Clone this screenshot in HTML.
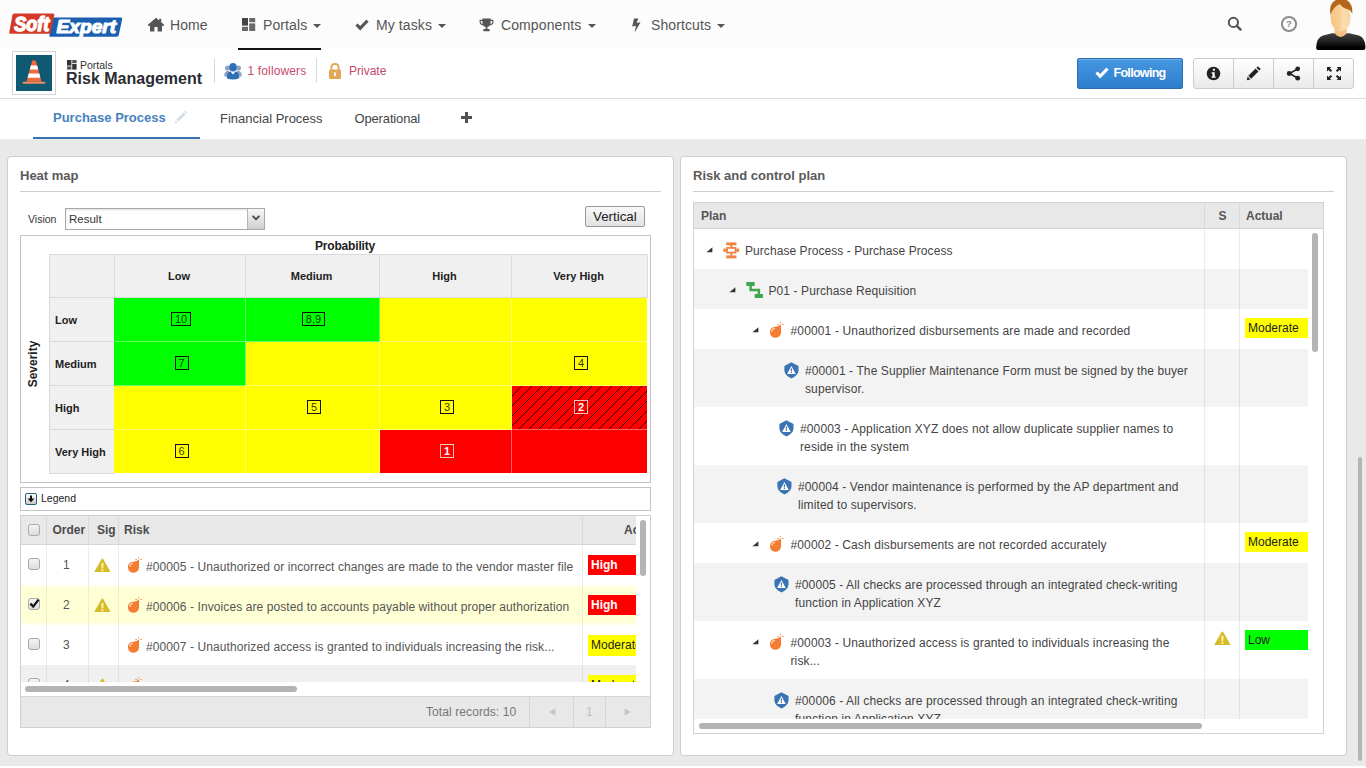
<!DOCTYPE html>
<html>
<head>
<meta charset="utf-8">
<title>Risk Management</title>
<style>
*{box-sizing:border-box;margin:0;padding:0}
html,body{width:1366px;height:768px;overflow:hidden}
body{font-family:"Liberation Sans",sans-serif;background:#e9e9e9;color:#444;position:relative;font-size:12px}
.abs{position:absolute}
.t{position:absolute;white-space:nowrap;line-height:1}
#nav{position:absolute;left:0;top:0;width:1366px;height:50px;background:linear-gradient(#fcfcfc 0,#fcfcfc 47px,#fff 49px)}
#hdr{position:absolute;left:0;top:50px;width:1366px;height:49px;background:#fff;border-bottom:1px solid #dcdcdc}
#tabs{position:absolute;left:0;top:99px;width:1366px;height:40px;background:#fff}
.nv{font-size:14px;color:#555;top:18px;letter-spacing:.1px}
.caret{position:absolute;width:0;height:0;border-left:4px solid transparent;border-right:4px solid transparent;border-top:4px solid #555;top:24px}
.panel{position:absolute;top:156px;width:667px;height:600px;background:#fff;border:1px solid #cdcdcd;border-radius:4px}
.ptitle{font-size:13px;font-weight:bold;color:#555;top:169px}
.prule{position:absolute;height:1px;background:#d0d0d0;top:190px}

.hc{position:absolute;background:#f0f0f0;font-weight:bold;font-size:11px;color:#222;display:flex;align-items:center}
.hc.c{justify-content:center;padding-right:2px}
.cell{position:absolute;z-index:1}
.nb,.wl{z-index:2}
.nb{position:absolute;height:14px;border:1px solid #111;font-size:11px;line-height:12px;text-align:center;color:rgba(0,0,0,.82)}
.nb.w{border-color:#f6c2c2;color:#fff;font-weight:bold}
.gl{position:absolute;background:#dadada}
.wl{position:absolute;background:rgba(255,255,255,.38)}
.gh{position:absolute;font-weight:bold;font-size:12px;color:#4c4c4c;white-space:nowrap;line-height:1}
.gt{position:absolute;font-size:12px;color:#555;white-space:nowrap;line-height:1;letter-spacing:.09px}
.cb{position:absolute;width:12px;height:12px;border:1px solid #a9a9a9;border-radius:3px;background:linear-gradient(#f4f4f4,#dcdcdc)}
.lbl{position:absolute;font-size:12px;line-height:1;white-space:nowrap;overflow:hidden}
.tr,#t10,#t10+div{letter-spacing:.12px}
#t1{letter-spacing:.06px}#t2{letter-spacing:.09px}#t3{letter-spacing:.146px}#t4{letter-spacing:.105px}#t5{letter-spacing:.126px}#t9{letter-spacing:.136px}
</style>
</head>
<body>
<svg width="0" height="0" style="position:absolute"><defs>
<symbol id="i-bomb" viewBox="0 0 15 17"><path d="M12 2.6 L12.1 10.2 A5.6 5.6 0 1 1 6 4.67 Q9.6 4.8 12 2.6 Z" fill="#f47d33"/><path d="M8.2 2.4 H10.2 M12.8 2.4 H14.8 M11.5 -0.4 V1.3" stroke="#f4935a" stroke-width="0.9" fill="none"/><path d="M2.9 9.2 Q3.3 6.9 5.5 6.2" stroke="#fff" stroke-opacity=".8" stroke-width="1.2" fill="none" stroke-linecap="round"/></symbol>
<symbol id="i-warn" viewBox="0 0 17 15"><path d="M8.4 0.6 Q8.9 0.6 9.2 1.1 L16.2 13.2 Q16.6 14.1 15.6 14.1 H1.2 Q0.2 14.1 0.6 13.2 L7.6 1.1 Q7.9 0.6 8.4 0.6 Z" fill="#d6bb2a"/><path d="M7.4 4.9 H9.5 L9.3 10.2 H7.6 Z M7.5 11.2 H9.4 V13 H7.5 Z" fill="#fff6b0"/></symbol>
<symbol id="i-shield" viewBox="0 0 16 17"><path d="M7.4 0.2 L14.5 4.1 V8.2 Q14.5 13 7.5 16.4 Q0.4 13 0.4 8.2 V4.1 Z" fill="#3a74b4"/><path d="M7.4 4.1 L11.7 11.9 H3.1 Z" fill="#fff"/><path d="M6.7 6.4 H8.1 L7.9 9.4 H6.9 Z M6.8 10.1 H8 V11 H6.8 Z" fill="#3a74b4"/></symbol>
<symbol id="i-arrow" viewBox="0 0 7 7"><path d="M6.4 1.2 V6.2 H0.4 Z" fill="#333"/></symbol>
</defs></svg>
<!-- NAV -->
<div id="nav"></div>
<!-- logo -->
<svg class="abs" style="left:8px;top:10px" width="118" height="30" viewBox="8 10 118 30">
  <path d="M53 17.5 H121 Q122.5 17.5 122.2 19 L118.8 35 Q118.4 36.8 116.8 36.8 H50.5 Q49 36.8 49.3 35.3 Z" fill="#1c5fb0"/>
  <path d="M14 13.5 H53 Q54.6 13.5 54.3 15 L50.6 32.2 Q50.3 33.8 48.7 33.8 H10.6 Q9 33.8 9.3 32.3 L12.4 15 Q12.7 13.5 14 13.5 Z" fill="#d43a27"/>
  <text x="14.2" y="30.9" font-family="Liberation Sans" font-weight="bold" font-style="italic" font-size="19.5" fill="#fff" stroke="#fff" stroke-width="1.4" stroke-linejoin="round" textLength="35" lengthAdjust="spacingAndGlyphs">Soft</text>
  <text x="56.6" y="32.6" font-family="Liberation Sans" font-weight="bold" font-style="italic" font-size="18" fill="#fff" stroke="#fff" stroke-width="1.15" stroke-linejoin="round" textLength="59.5" lengthAdjust="spacingAndGlyphs">Expert</text>
</svg>
<!-- home -->
<svg class="abs" style="left:147px;top:17px" width="18" height="15" viewBox="0 0 18 15"><path d="M9 0.8 L0.6 8 L2 9.2 L3 8.4 V14.4 H7.4 V10 H10.6 V14.4 H15 V8.4 L16 9.2 L17.4 8 L14.2 5.2 V1.8 H12.2 V3.5 Z" fill="#555"/></svg>
<div class="t nv" style="left:170px">Home</div>
<!-- portals -->
<svg class="abs" style="left:242px;top:18px" width="14" height="13" viewBox="0 0 14 13"><rect x="0" y="0" width="6" height="7.6" fill="#444"/><rect x="0" y="8.8" width="6" height="4.2" fill="#6a6a6a"/><rect x="7.2" y="0" width="6" height="4.2" fill="#6a6a6a"/><rect x="7.2" y="5.4" width="6" height="7.6" fill="#6a6a6a"/></svg>
<div class="t nv" style="left:263px">Portals</div>
<div class="caret" style="left:313px"></div>
<div class="abs" style="left:238px;top:48px;width:83px;height:2px;background:#111"></div>
<!-- my tasks -->
<svg class="abs" style="left:354.6px;top:19px" width="14" height="12" viewBox="0 0 14 12"><path d="M0.4 6.6 L2.6 4.4 L5.2 7 L11.4 0.6 L13.6 2.8 L5.2 11.4 Z" fill="#555"/></svg>
<div class="t nv" style="left:376px">My tasks</div>
<div class="caret" style="left:438px"></div>
<!-- components -->
<svg class="abs" style="left:479px;top:18px" width="15" height="14" viewBox="0 0 15 14"><path d="M3.4 0.6 H11.6 V1.8 H14.4 V4 Q14.4 6.6 10.8 7.4 Q9.8 8.6 8.4 9 V11 H10.6 V13.2 H4.4 V11 H6.6 V9 Q5.2 8.6 4.2 7.4 Q0.6 6.6 0.6 4 V1.8 H3.4 Z M1.7 2.9 V4 Q1.7 5.5 3.6 6.2 Q3.4 5 3.4 2.9 Z M13.3 2.9 H11.6 Q11.6 5 11.4 6.2 Q13.3 5.5 13.3 4 Z" fill="#555" fill-rule="evenodd"/></svg>
<div class="t nv" style="left:501px">Components</div>
<div class="caret" style="left:588px"></div>
<!-- shortcuts -->
<svg class="abs" style="left:631px;top:17.6px" width="11" height="15" viewBox="0 0 11 15"><path d="M3 0.6 H7.4 L5.6 5 L9.6 4.2 L3.6 14.6 L5 7.8 L1.2 8.6 Z" fill="#555"/></svg>
<div class="t nv" style="left:651px">Shortcuts</div>
<div class="caret" style="left:717px"></div>
<!-- search -->
<svg class="abs" style="left:1227px;top:16px" width="16" height="16" viewBox="0 0 16 16"><circle cx="6.4" cy="6.4" r="4.6" fill="none" stroke="#555" stroke-width="2"/><path d="M9.8 9.8 L13.6 13.6" stroke="#555" stroke-width="2.4" stroke-linecap="round"/></svg>
<!-- help -->
<svg class="abs" style="left:1280px;top:15px" width="18" height="18" viewBox="0 0 18 18"><circle cx="9" cy="9" r="7.1" fill="none" stroke="#8c8c8c" stroke-width="2"/><text x="9" y="12.4" text-anchor="middle" font-family="Liberation Sans" font-weight="bold" font-size="9.5" fill="#8c8c8c">?</text></svg>
<!-- avatar -->
<svg class="abs" style="left:1315px;top:0" width="51" height="50" viewBox="0 0 51 50">
  <defs><linearGradient id="bd" x1="0" y1="0" x2="0" y2="1"><stop offset="0" stop-color="#404040"/><stop offset="0.55" stop-color="#1c1c1c"/><stop offset="0.85" stop-color="#000"/></linearGradient>
  <linearGradient id="fc" x1="0" y1="0" x2="1" y2="0"><stop offset="0" stop-color="#f5c585"/><stop offset="0.42" stop-color="#f8cd92"/><stop offset="0.6" stop-color="#fbdcae"/><stop offset="1" stop-color="#fad6a2"/></linearGradient></defs>
  <path d="M1.2 47 Q1.6 38 8 35.6 L17 33.2 H34 L44 35.6 Q50 38 50.4 46 V48 Q50.4 50 48.5 50 H3 Q1 50 1.2 47 Z" fill="url(#bd)"/>
  <path d="M19.6 26 H31.6 V33.6 Q25.6 40.5 19.6 33.6 Z" fill="#f4c384"/>
  <ellipse cx="25.6" cy="17.6" rx="10" ry="13.8" fill="url(#fc)"/>
  <path d="M15.5 15 Q13.6 4 20 0.5 L24 -1 H30 Q38.4 3 37.2 14 Q35.8 9.6 31 8.7 Q27 7.6 24.8 4 Q17.8 7 15.5 15 Z" fill="#b3671a"/>
</svg>

<div id="hdr"></div>
<!-- portal icon -->
<div class="abs" style="left:12px;top:51px;width:44px;height:44px;border:1px solid #d4d4d4;background:#fff"></div>
<svg class="abs" style="left:16px;top:55px" width="36" height="36" viewBox="0 0 36 36"><rect width="36" height="36" fill="#0e5a73"/>
<path d="M16.2 5.5 H19.8 L25.5 26.8 H10.5 Z" fill="#f06a3c"/>
<path d="M14.9 10.4 H21.1 L22.2 14.4 H13.8 Z" fill="#fff"/><path d="M12.7 18.6 H23.3 L24.4 22.8 H11.6 Z" fill="#fff"/>
<path d="M8 26.8 H28 Q29.5 26.8 29.5 27.8 Q29.5 28.8 28 28.8 H8 Q6.5 28.8 6.5 27.8 Q6.5 26.8 8 26.8 Z" fill="#f28b63"/></svg>
<svg class="abs" style="left:67px;top:60px" width="10" height="10" viewBox="0 0 10 10"><rect x="0" y="0" width="4.4" height="5.6" fill="#333"/><rect x="0" y="6.4" width="4.4" height="3.2" fill="#555"/><rect x="5.2" y="0" width="4.4" height="3.2" fill="#555"/><rect x="5.2" y="4" width="4.4" height="5.6" fill="#333"/></svg>
<div class="t" style="left:80px;top:59.5px;font-size:10.5px;color:#333">Portals</div>
<div class="t" id="ttl" style="left:66px;top:70.5px;font-size:16px;font-weight:bold;color:#2b2b33">Risk Management</div>
<div class="abs" style="left:214px;top:58px;width:1px;height:25px;background:#d8d8d8"></div>
<div class="abs" style="left:316px;top:58px;width:1px;height:25px;background:#d8d8d8"></div>
<!-- followers icon -->
<svg class="abs" style="left:224px;top:62px" width="18" height="18" viewBox="0 0 18 18">
<circle cx="3.6" cy="6" r="2.6" fill="#8fa3c2"/><circle cx="14.4" cy="6" r="2.6" fill="#8fa3c2"/>
<path d="M0.3 13.5 Q0.3 9 3.8 9 Q6 9 6.6 11 L6 14.5 H0.3 Z" fill="#8fa3c2"/><path d="M17.7 13.5 Q17.7 9 14.2 9 Q12 9 11.4 11 L12 14.5 H17.7 Z" fill="#8fa3c2"/>
<ellipse cx="9" cy="5.2" rx="3.7" ry="4.2" fill="#2f6fb7"/>
<path d="M2.8 16.2 Q2.6 10.2 6.4 9.6 L9 12.4 L11.6 9.6 Q15.4 10.2 15.2 16.2 Q9 18.6 2.8 16.2 Z" fill="#2f6fb7"/></svg>
<div class="t" id="fol" style="left:247.5px;top:64.5px;font-size:12px;color:#c64b6c;letter-spacing:.14px">1 followers</div>
<!-- lock -->
<svg class="abs" style="left:328px;top:62px" width="14" height="18" viewBox="0 0 14 18"><path d="M3.4 8 V5.4 Q3.4 2 7 2 Q10.6 2 10.6 5.4 V8" fill="none" stroke="#e3a758" stroke-width="1.9"/><rect x="1" y="7.6" width="12" height="9.4" rx="1.2" fill="#e3a758"/><rect x="6.1" y="10.4" width="1.8" height="3.8" fill="#fff"/></svg>
<div class="t" id="prv" style="left:349px;top:64.5px;font-size:12px;color:#c4476b">Private</div>
<!-- following btn -->
<div class="abs" style="left:1077px;top:58px;width:106px;height:31px;border:1px solid #2a6db3;border-radius:2px;background:linear-gradient(#4697e1,#2e7ecd);box-shadow:inset 0 1px 0 rgba(255,255,255,.22)"></div>
<svg class="abs" style="left:1095px;top:67px" width="14" height="12" viewBox="0 0 14 12"><path d="M0.4 6.6 L2.6 4.4 L5.2 7 L11.4 0.6 L13.6 2.8 L5.2 11.4 Z" fill="#fff"/></svg>
<div class="t" id="flw" style="left:1113.5px;top:66.5px;font-size:12.5px;font-weight:bold;color:#fff;letter-spacing:-0.7px">Following</div>
<!-- btn group -->
<div class="abs" style="left:1193px;top:58px;width:161px;height:31px;border:1px solid #ccc;border-radius:3px;background:linear-gradient(#fff,#e9e9e9)"></div>
<div class="abs" style="left:1233px;top:59px;width:1px;height:29px;background:#ccc"></div>
<div class="abs" style="left:1273px;top:59px;width:1px;height:29px;background:#ccc"></div>
<div class="abs" style="left:1313px;top:59px;width:1px;height:29px;background:#ccc"></div>
<svg class="abs" style="left:1206px;top:66px" width="15" height="15" viewBox="0 0 15 15"><circle cx="7.5" cy="7.5" r="6.8" fill="#222"/><path d="M6.9 2.8 H8.9 V4.8 H6.9 Z M5.6 6.2 H8.7 V10.6 H9.6 V11.8 H5.6 V10.6 H6.5 V7.4 H5.6 Z" fill="#fff"/></svg>
<svg class="abs" style="left:1246px;top:66px" width="15" height="15" viewBox="0 0 15 15"><path d="M0.8 14.2 L1.6 10.6 L4.4 13.4 Z M2.3 9.8 L9.6 2.5 L12.5 5.4 L5.2 12.7 Z M10.4 1.7 L11.4 0.7 Q11.9 0.3 12.4 0.7 L14.3 2.6 Q14.7 3.1 14.3 3.6 L13.3 4.6 Z" fill="#222"/></svg>
<svg class="abs" style="left:1286px;top:66px" width="15" height="15" viewBox="0 0 15 15"><path d="M11.5 3 L3.5 7.5 L11.5 12" fill="none" stroke="#222" stroke-width="1.5"/><circle cx="11.7" cy="2.8" r="2.4" fill="#222"/><circle cx="3.2" cy="7.5" r="2.4" fill="#222"/><circle cx="11.7" cy="12.2" r="2.4" fill="#222"/></svg>
<svg class="abs" style="left:1327px;top:67px" width="14" height="13" viewBox="0 0 14 13"><g fill="#222"><path d="M0 0 H4.4 L2.9 1.5 L5.2 3.6 L3.8 5 L1.5 2.9 L0 4.4 Z"/><path d="M14 0 H9.6 L11.1 1.5 L8.8 3.6 L10.2 5 L12.5 2.9 L14 4.4 Z"/><path d="M0 13 H4.4 L2.9 11.5 L5.2 9.4 L3.8 8 L1.5 10.1 L0 8.6 Z"/><path d="M14 13 H9.6 L11.1 11.5 L8.8 9.4 L10.2 8 L12.5 10.1 L14 8.6 Z"/></g></svg>

<div id="tabs"></div>
<div class="t" id="tb1" style="left:53px;top:111px;font-size:13px;font-weight:bold;color:#4682be">Purchase Process</div>
<svg class="abs" style="left:174px;top:110px" width="14" height="14" viewBox="0 0 14 14"><path d="M0.6 13.4 L1.6 10.4 L3.6 12.4 Z M2.2 9.8 L9.6 2.4 L11.6 4.4 L4.2 11.8 Z M10.2 1.8 L11.2 0.8 L13.2 2.8 L12.2 3.8 Z" fill="#d3dde3"/></svg>
<div class="abs" style="left:33px;top:137px;width:167px;height:2px;background:#3775b2"></div>
<div class="t" id="tb2" style="left:220px;top:111.5px;font-size:13px;color:#444">Financial Process</div>
<div class="t" id="tb3" style="left:354.5px;top:111.5px;font-size:13px;color:#444;letter-spacing:-.15px">Operational</div>
<div class="abs" style="left:460.7px;top:116.1px;width:11px;height:3px;background:#505050"></div>
<div class="abs" style="left:464.7px;top:112.1px;width:3px;height:11px;background:#505050"></div>


<!-- PANELS -->
<div class="panel" style="left:7px"></div>
<!-- LEFT PANEL -->
<div class="t" style="left:20px;top:169px;font-size:13px;font-weight:bold;color:#5a5a5a">Heat map</div>
<div class="abs" style="left:20px;top:191px;width:641px;height:1px;background:#cfcfcf"></div>
<div class="t" id="vis" style="left:28px;top:214px;font-size:10.5px;color:#333">Vision</div>
<div class="abs" style="left:65px;top:208px;width:200px;height:22px;border:1px solid #a8a8a8;background:#fff;box-shadow:inset 0 1px 2px rgba(120,120,180,.25)"></div>
<div class="t" id="res" style="left:69px;top:213.5px;font-size:11.5px;color:#333">Result</div>
<div class="abs" style="left:247px;top:209px;width:17px;height:20px;border-left:1px solid #b5b5b5;background:linear-gradient(#f6f6f6,#cfcfcf)"></div>
<svg class="abs" style="left:250.5px;top:214px" width="10" height="8" viewBox="0 0 10 8"><path d="M1.6 1.8 L5 5.2 L8.4 1.8" fill="none" stroke="#444" stroke-width="1.7"/></svg>
<div class="abs" style="left:585px;top:206px;width:60px;height:21px;border:1px solid #9a9a9a;border-radius:2px;background:linear-gradient(#f8f8f8,#e2e2e2)"></div>
<div class="t" id="vert" style="left:593px;top:209.5px;font-size:13.33px;color:#222">Vertical</div>
<div class="abs" style="left:20px;top:235px;width:631px;height:248px;border:1px solid #c4c4c4;background:#fff"></div>
<div class="t" id="prob" style="left:315px;top:240px;font-size:12px;font-weight:bold;color:#222;letter-spacing:-.18px">Probability</div>
<div class="t" id="sev" style="left:33px;top:364px;font-size:12px;font-weight:bold;color:#222;transform:translate(-50%,-50%) rotate(-90deg)">Severity</div>
<div class="hc" style="left:49px;top:254px;width:599px;height:43px"></div>
<div class="hc" style="left:49px;top:254px;width:65px;height:220px"></div>
<div class="hc c" style="left:115px;top:255px;width:130px;height:42px">Low</div>
<div class="hc c" style="left:246px;top:255px;width:133px;height:42px">Medium</div>
<div class="hc c" style="left:380px;top:255px;width:131px;height:42px">High</div>
<div class="hc c" style="left:512px;top:255px;width:135px;height:42px">Very High</div>
<div class="hc" style="left:50px;top:298px;width:64px;height:43px;padding-left:5px">Low</div>
<div class="hc" style="left:50px;top:342px;width:64px;height:43px;padding-left:5px">Medium</div>
<div class="hc" style="left:50px;top:386px;width:64px;height:43px;padding-left:5px">High</div>
<div class="hc" style="left:50px;top:430px;width:64px;height:43px;padding-left:5px">Very High</div>
<div class="cell" style="left:114px;top:298px;width:132px;height:44px;background-color:#00ff00"></div>
<div class="cell" style="left:246px;top:298px;width:134px;height:44px;background-color:#00ff00"></div>
<div class="cell" style="left:380px;top:298px;width:132px;height:44px;background-color:#ffff00"></div>
<div class="cell" style="left:512px;top:298px;width:135px;height:44px;background-color:#ffff00"></div>
<div class="cell" style="left:114px;top:342px;width:132px;height:44px;background-color:#00ff00"></div>
<div class="cell" style="left:246px;top:342px;width:134px;height:44px;background-color:#ffff00"></div>
<div class="cell" style="left:380px;top:342px;width:132px;height:44px;background-color:#ffff00"></div>
<div class="cell" style="left:512px;top:342px;width:135px;height:44px;background-color:#ffff00"></div>
<div class="cell" style="left:114px;top:386px;width:132px;height:44px;background-color:#ffff00"></div>
<div class="cell" style="left:246px;top:386px;width:134px;height:44px;background-color:#ffff00"></div>
<div class="cell" style="left:380px;top:386px;width:132px;height:44px;background-color:#ffff00"></div>
<div class="cell" style="left:512px;top:386px;width:135px;height:44px;background-color:#ff0000"><svg width="135" height="44" style="display:block"><defs><pattern id="hatch" width="10" height="10" patternUnits="userSpaceOnUse"><path d="M-1 11 L11 -1 M-1 1 L1 -1 M9 11 L11 9" stroke="#150000" stroke-width="0.85"/></pattern></defs><rect width="135" height="43" fill="url(#hatch)"/></svg></div>
<div class="cell" style="left:114px;top:430px;width:132px;height:43px;background-color:#ffff00"></div>
<div class="cell" style="left:246px;top:430px;width:134px;height:43px;background-color:#ffff00"></div>
<div class="cell" style="left:380px;top:430px;width:132px;height:43px;background-color:#ff0000"></div>
<div class="cell" style="left:512px;top:430px;width:135px;height:43px;background-color:#ff0000"></div>
<div class="gl" style="left:49px;top:254px;width:1px;height:44px"></div>
<div class="gl" style="left:114px;top:254px;width:1px;height:44px"></div>
<div class="gl" style="left:245px;top:254px;width:1px;height:44px"></div>
<div class="gl" style="left:379px;top:254px;width:1px;height:44px"></div>
<div class="gl" style="left:511px;top:254px;width:1px;height:44px"></div>
<div class="gl" style="left:647px;top:254px;width:1px;height:44px"></div>
<div class="gl" style="left:49px;top:254px;width:1px;height:220px"></div>
<div class="gl" style="left:114px;top:254px;width:1px;height:220px"></div>
<div class="gl" style="left:49px;top:254px;width:599px;height:1px"></div>
<div class="gl" style="left:49px;top:297px;width:599px;height:1px"></div>
<div class="gl" style="left:49px;top:254px;width:66px;height:1px"></div>
<div class="gl" style="left:49px;top:297px;width:66px;height:1px"></div>
<div class="gl" style="left:49px;top:341px;width:66px;height:1px"></div>
<div class="gl" style="left:49px;top:385px;width:66px;height:1px"></div>
<div class="gl" style="left:49px;top:429px;width:66px;height:1px"></div>
<div class="gl" style="left:49px;top:473px;width:66px;height:1px"></div>
<div class="wl" style="left:245px;top:298px;width:1px;height:175px"></div>
<div class="wl" style="left:379px;top:298px;width:1px;height:175px"></div>
<div class="wl" style="left:511px;top:298px;width:1px;height:175px"></div>
<div class="wl" style="left:115px;top:341px;width:532px;height:1px"></div>
<div class="wl" style="left:115px;top:385px;width:532px;height:1px"></div>
<div class="wl" style="left:115px;top:429px;width:532px;height:1px"></div>
<div class="nb" style="left:171.0px;top:311.5px;width:20px">10</div>
<div class="nb" style="left:302.0px;top:311.5px;width:23px">8,9</div>
<div class="nb" style="left:174.5px;top:355.5px;width:14px">7</div>
<div class="nb" style="left:574.0px;top:355.5px;width:14px">4</div>
<div class="nb" style="left:307.0px;top:399.5px;width:14px">5</div>
<div class="nb" style="left:440.0px;top:399.5px;width:14px">3</div>
<div class="nb w" style="left:574.0px;top:399.5px;width:14px">2</div>
<div class="nb" style="left:174.5px;top:443.5px;width:14px">6</div>
<div class="nb w" style="left:440.0px;top:443.5px;width:14px">1</div>
<div class="abs" style="left:20px;top:487px;width:631px;height:24px;border:1px solid #c4c4c4;background:#fff"></div>
<div class="abs" style="left:25px;top:493px;width:12px;height:12px;border:1px solid #1f6577;border-radius:2px;background:linear-gradient(#fff,#c8c8c8)"></div>
<svg class="abs" style="left:27px;top:495px" width="8" height="8" viewBox="0 0 8 8"><path d="M3 0.5 H5 V3.6 H7.4 L4 7.2 L0.6 3.6 H3 Z" fill="#111"/></svg>
<div class="t" id="leg" style="left:41px;top:493px;font-size:10.5px;color:#222">Legend</div>
<!-- GRID -->
<div class="abs" style="left:20px;top:515px;width:631px;height:213px;border:1px solid #cfcfcf;background:#fff"></div>
<div class="abs" style="left:21px;top:516px;width:615px;height:29px;background:#e8e8e8;border-bottom:1px solid #d4d4d4"></div>
<div class="abs" style="left:46px;top:516px;width:1px;height:29px;background:#dadada"></div>
<div class="abs" style="left:88px;top:516px;width:1px;height:29px;background:#dadada"></div>
<div class="abs" style="left:118px;top:516px;width:1px;height:29px;background:#dadada"></div>
<div class="abs" style="left:582px;top:516px;width:1px;height:29px;background:#dadada"></div>
<div class="cb" style="left:28px;top:524px"></div>
<div class="gh" id="gh1" style="left:52.5px;top:524px">Order</div>
<div class="gh" id="gh2" style="left:97px;top:524px">Sig</div>
<div class="gh" id="gh3" style="left:124px;top:524px">Risk</div>
<div class="abs" style="left:583px;top:516px;width:53px;height:28px;overflow:hidden"><div class="gh" style="left:41px;top:8px">Actual</div></div>
<div class="abs" style="left:21px;top:545px;width:615px;height:40px;background:#fff"></div>
<div class="abs" style="left:21px;top:585px;width:615px;height:40px;background:linear-gradient(#ffffee 0,#ffffd6 4px,#ffffd6 36px,#ffffee 40px)"></div>
<div class="abs" style="left:21px;top:625px;width:615px;height:40px;background:#fff"></div>
<div class="abs" style="left:21px;top:665px;width:615px;height:17px;background:#f0f0f0"></div>
<div class="abs" style="left:46px;top:545px;width:1px;height:138px;background:rgba(0,0,0,.07)"></div>
<div class="abs" style="left:88px;top:545px;width:1px;height:138px;background:rgba(0,0,0,.07)"></div>
<div class="abs" style="left:118px;top:545px;width:1px;height:138px;background:rgba(0,0,0,.07)"></div>
<div class="abs" style="left:582px;top:545px;width:1px;height:138px;background:rgba(0,0,0,.07)"></div>
<div class="cb" style="left:28px;top:558px"></div>
<div class="gt" style="left:56px;top:559px;width:21px;text-align:center">1</div>
<svg class="abs" style="left:93.5px;top:558px" width="17" height="15"><use href="#i-warn"/></svg>
<svg class="abs" style="left:127px;top:557.2px" width="15" height="17"><use href="#i-bomb"/></svg>
<div class="gt" id="r0" style="left:146px;top:561px">#00005 - Unauthorized or incorrect changes are made to the vendor master file</div>
<div class="lbl" style="left:588px;top:555px;width:48px;height:20px;background:#ff0000;color:#fff;font-weight:bold;padding:4px 0 0 3px">High</div>
<div class="cb" style="left:28px;top:598px"></div>
<svg class="abs" style="left:29px;top:598px" width="11" height="11" viewBox="0 0 11 11"><path d="M1.4 5.6 L4.2 8.6 L9.6 1.6" fill="none" stroke="#111" stroke-width="2.3"/></svg>
<div class="gt" style="left:56px;top:599px;width:21px;text-align:center">2</div>
<svg class="abs" style="left:93.5px;top:598px" width="17" height="15"><use href="#i-warn"/></svg>
<svg class="abs" style="left:127px;top:597.2px" width="15" height="17"><use href="#i-bomb"/></svg>
<div class="gt" id="r1" style="left:146px;top:601px">#00006 - Invoices are posted to accounts payable without proper authorization</div>
<div class="lbl" style="left:588px;top:595px;width:48px;height:20px;background:#ff0000;color:#fff;font-weight:bold;padding:4px 0 0 3px">High</div>
<div class="cb" style="left:28px;top:638px"></div>
<div class="gt" style="left:56px;top:639px;width:21px;text-align:center">3</div>
<svg class="abs" style="left:127px;top:637.2px" width="15" height="17"><use href="#i-bomb"/></svg>
<div class="gt" id="r2" style="left:146px;top:641px">#00007 - Unauthorized access is granted to individuals increasing the risk...</div>
<div class="lbl" style="left:588px;top:635px;width:48px;height:21px;background:#ffff00;color:#222;padding:4px 0 0 3px">Moderate</div>
<div class="abs" style="left:21px;top:665px;width:615px;height:17px;overflow:hidden"><div class="cb" style="left:7px;top:13px"></div><div class="gt" style="left:35px;top:14px;width:21px;text-align:center">4</div><svg class="abs" style="left:72.5px;top:13px" width="17" height="15"><use href="#i-warn"/></svg><svg class="abs" style="left:106px;top:12.2px" width="15" height="17"><use href="#i-bomb"/></svg><div class="lbl" style="left:567px;top:10px;width:48px;height:21px;background:#ffff00;color:#222;padding:4px 0 0 3px">Moderate</div></div>
<div class="abs" style="left:640px;top:520px;width:6px;height:56px;border-radius:3px;background:#b4b4b4"></div>
<div class="abs" style="left:25px;top:686px;width:272px;height:6px;border-radius:3px;background:#b4b4b4"></div>
<div class="abs" style="left:21px;top:696px;width:629px;height:31px;background:#e8e8e8;border-top:1px solid #d8d8d8"></div>
<div class="abs" style="left:529px;top:697px;width:1px;height:30px;background:#d6d6d6"></div>
<div class="abs" style="left:573px;top:697px;width:1px;height:30px;background:#d6d6d6"></div>
<div class="abs" style="left:605px;top:697px;width:1px;height:30px;background:#d6d6d6"></div>
<div class="gt" id="tot" style="left:426px;top:706px;color:#777">Total records: 10</div>
<svg class="abs" style="left:548px;top:708px" width="8" height="8" viewBox="0 0 8 8"><path d="M7.4 0.6 V7.4 L0.8 4 Z" fill="#c6c6c6"/></svg>
<div class="gt" style="left:586px;top:706px;color:#c0c0c0">1</div>
<svg class="abs" style="left:624px;top:708px" width="8" height="8" viewBox="0 0 8 8"><path d="M0.6 0.6 V7.4 L7.2 4 Z" fill="#c6c6c6"/></svg>

<div class="panel" style="left:680px;width:667px"></div>

<!-- RIGHT PANEL -->
<div class="t" style="left:693px;top:169px;font-size:13px;font-weight:bold;color:#5a5a5a">Risk and control plan</div>
<div class="abs" style="left:693px;top:191px;width:641px;height:1px;background:#cfcfcf"></div>
<div class="abs" style="left:693px;top:202px;width:631px;height:532px;border:1px solid #d2d2d2;background:#fff"></div>
<div class="abs" style="left:694px;top:203px;width:629px;height:26px;background:#e8e8e8;border-bottom:1px solid #d4d4d4"></div>
<div class="abs" style="left:1204px;top:203px;width:1px;height:26px;background:#d8d8d8"></div>
<div class="abs" style="left:1239px;top:203px;width:1px;height:26px;background:#d8d8d8"></div>
<div class="gh" style="left:701px;top:210px;color:#555">Plan</div>
<div class="gh" style="left:1218.5px;top:210px;color:#555">S</div>
<div class="gh" style="left:1246px;top:210px;color:#555">Actual</div>
<div class="abs" style="left:694px;top:229px;width:614px;height:40px;background:#fff"></div>
<div class="abs" style="left:694px;top:269px;width:614px;height:40px;background:#f3f3f3"></div>
<div class="abs" style="left:694px;top:309px;width:614px;height:40px;background:#fff"></div>
<div class="abs" style="left:694px;top:349px;width:614px;height:58px;background:#f3f3f3"></div>
<div class="abs" style="left:694px;top:407px;width:614px;height:58px;background:#fff"></div>
<div class="abs" style="left:694px;top:465px;width:614px;height:58px;background:#f3f3f3"></div>
<div class="abs" style="left:694px;top:523px;width:614px;height:40px;background:#fff"></div>
<div class="abs" style="left:694px;top:563px;width:614px;height:58px;background:#f3f3f3"></div>
<div class="abs" style="left:694px;top:621px;width:614px;height:58px;background:#fff"></div>
<div class="abs" style="left:694px;top:679px;width:614px;height:40px;background:#f3f3f3"></div>
<div class="abs" style="left:1204px;top:229px;width:1px;height:490px;background:rgba(0,0,0,.07)"></div>
<div class="abs" style="left:1239px;top:229px;width:1px;height:490px;background:rgba(0,0,0,.07)"></div>
<svg class="abs" style="left:706px;top:246px" width="7" height="7"><use href="#i-arrow"/></svg>
<svg class="abs" style="left:722.5px;top:241.5px" width="17" height="17" viewBox="0 0 17 17"><g fill="#ee8545"><rect x="3.2" y="0.4" width="10.2" height="3"/><rect x="3.2" y="13.4" width="10.2" height="3"/><rect x="7.3" y="3" width="2" height="2.4"/><rect x="7.3" y="11.2" width="2" height="2.4"/><rect x="0.3" y="6.6" width="3.2" height="3.4" rx="1.2"/><rect x="13.1" y="6.6" width="3.2" height="3.4" rx="1.2"/></g><rect x="4.1" y="5.9" width="8.4" height="4.8" fill="#fff" stroke="#ee8545" stroke-width="1.8"/></svg>
<div class="gt tr" id=t1 style="left:745px;top:245px;color:#444">Purchase Process - Purchase Process</div>
<svg class="abs" style="left:729px;top:286px" width="7" height="7"><use href="#i-arrow"/></svg>
<svg class="abs" style="left:745.5px;top:282px" width="17" height="16" viewBox="0 0 17 16"><g fill="#3fa64d"><rect x="0.3" y="0" width="8.4" height="4"/><rect x="8.7" y="12" width="8.2" height="4"/></g><path d="M4.6 3.5 V8 H12.9 V12.5" fill="none" stroke="#3fa64d" stroke-width="2.4"/></svg>
<div class="gt tr" id=t2 style="left:768.5px;top:285px;color:#444">P01 - Purchase Requisition</div>
<svg class="abs" style="left:752px;top:326px" width="7" height="7"><use href="#i-arrow"/></svg>
<svg class="abs" style="left:769px;top:322.2px" width="15" height="17"><use href="#i-bomb"/></svg>
<div class="gt tr" id=t3 style="left:790.5px;top:325px;color:#444">#00001 - Unauthorized disbursements are made and recorded</div>
<svg class="abs" style="left:783.6px;top:362px" width="16" height="17"><use href="#i-shield"/></svg>
<div class="gt tr" id=t4 style="left:805px;top:365px;color:#444">#00001 - The Supplier Maintenance Form must be signed by the buyer</div><div class="gt tr"  style="left:805px;top:383px;color:#444">supervisor.</div>
<svg class="abs" style="left:778.6px;top:420px" width="16" height="17"><use href="#i-shield"/></svg>
<div class="gt tr" id=t5 style="left:800px;top:423px;color:#444">#00003 - Application XYZ does not allow duplicate supplier names to</div><div class="gt tr"  style="left:800px;top:441px;color:#444">reside in the system</div>
<svg class="abs" style="left:776.6px;top:478px" width="16" height="17"><use href="#i-shield"/></svg>
<div class="gt tr" id=t6 style="left:798px;top:481px;color:#444">#00004 - Vendor maintenance is performed by the AP department and</div><div class="gt tr"  style="left:798px;top:499px;color:#444">limited to supervisors.</div>
<svg class="abs" style="left:752px;top:540px" width="7" height="7"><use href="#i-arrow"/></svg>
<svg class="abs" style="left:769px;top:536.2px" width="15" height="17"><use href="#i-bomb"/></svg>
<div class="gt tr" id=t7 style="left:790.5px;top:539px;color:#444">#00002 - Cash disbursements are not recorded accurately</div>
<svg class="abs" style="left:774.1px;top:576px" width="16" height="17"><use href="#i-shield"/></svg>
<div class="gt tr" id=t8 style="left:795px;top:579px;color:#444">#00005 - All checks are processed through an integrated check-writing</div><div class="gt tr"  style="left:795px;top:597px;color:#444">function in Application XYZ</div>
<svg class="abs" style="left:752px;top:638px" width="7" height="7"><use href="#i-arrow"/></svg>
<svg class="abs" style="left:769px;top:634.2px" width="15" height="17"><use href="#i-bomb"/></svg>
<div class="gt tr" id=t9 style="left:790.5px;top:637px;color:#444">#00003 - Unauthorized access is granted to individuals increasing the</div><div class="gt tr"  style="left:790.5px;top:655px;color:#444">risk...</div>
<div class="abs" style="left:694px;top:679px;width:614px;height:40px;overflow:hidden"><svg class="abs" style="left:80.1px;top:13px" width="16" height="17"><use href="#i-shield"/></svg><div class="gt" id="t10" style="left:101px;top:16px;color:#444">#00006 - All checks are processed through an integrated check-writing</div><div class="gt" style="left:101px;top:34px;color:#444">function in Application XYZ</div></div>
<div class="lbl" style="left:1245px;top:318px;width:63px;height:20px;background:#ffff00;color:#222;padding:4px 0 0 3px">Moderate</div>
<div class="lbl" style="left:1245px;top:532px;width:63px;height:20px;background:#ffff00;color:#222;padding:4px 0 0 3px">Moderate</div>
<div class="lbl" style="left:1245px;top:630px;width:63px;height:20px;background:#00ff00;color:#222;padding:4px 0 0 3px">Low</div>
<svg class="abs" style="left:1213.5px;top:631px" width="17" height="15"><use href="#i-warn"/></svg>
<div class="abs" style="left:1312px;top:233px;width:6px;height:119px;border-radius:3px;background:#b4b4b4"></div>
<div class="abs" style="left:699px;top:723px;width:503px;height:6px;border-radius:3px;background:#b4b4b4"></div>
<div class="abs" style="left:1358px;top:457px;width:4px;height:304px;border-radius:2px;background:#b4b4b4"></div>
<div class="abs" style="left:0;top:766px;width:1366px;height:2px;background:#fff"></div>
</body>
</html>
